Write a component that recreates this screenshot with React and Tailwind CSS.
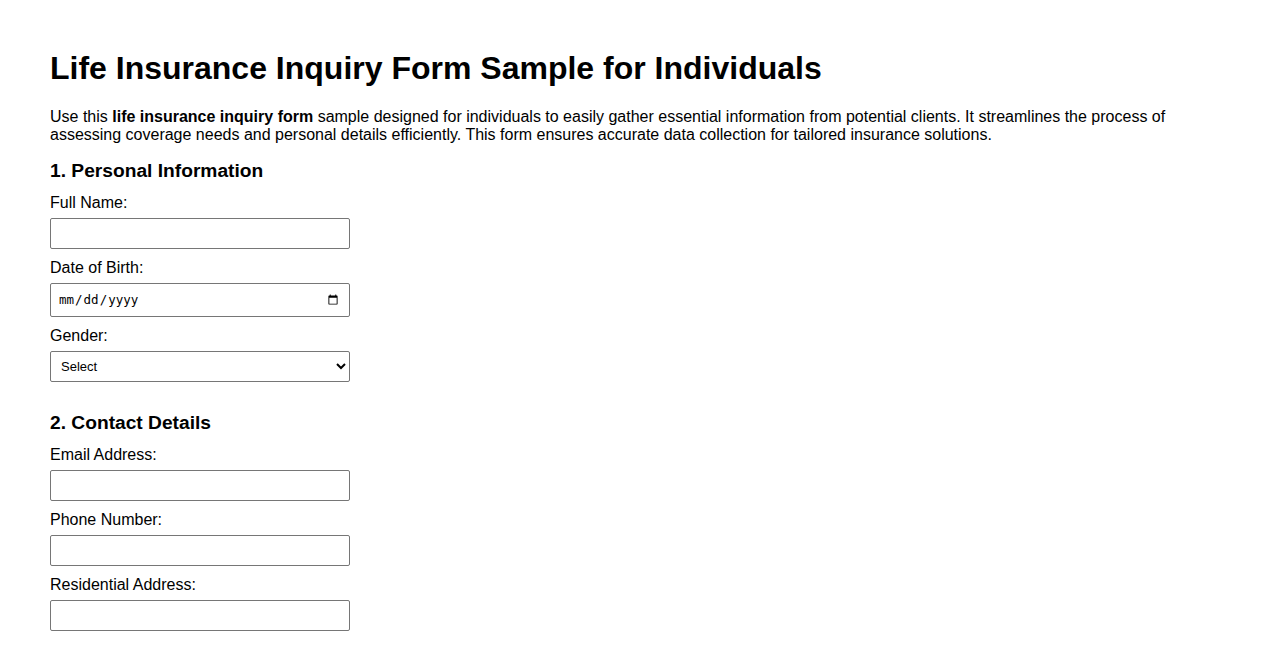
import React from "react";

const font = { fontFamily: '"Liberation Sans", Arial, sans-serif' };

const Field = ({ label, children, last }) => (
  <div className={last ? "" : "mb-[9px]"}>
    <label className="block text-[16px] leading-[18px] pt-[1px] mb-[6px]">{label}</label>
    {children}
  </div>
);

const inputCls =
  "block w-[300px] h-[31px] border border-[#767676] rounded-[2px] bg-white px-2 text-[13px] outline-none";

const App = () => {
  return (
    <div
      className="min-h-screen bg-white text-black pt-[50px] px-[50px] pb-8 font-['Liberation_Sans',Arial,sans-serif]"
      style={font}
    >
      <h1 className="text-[32px] leading-[37px] font-bold mb-[21px]">
        Life Insurance Inquiry Form Sample for Individuals
      </h1>

      <p className="text-[16px] leading-[18px] mb-[16px]">
        Use this <strong className="font-bold">life insurance inquiry form</strong> sample designed for
        individuals to easily gather essential information from potential clients. It streamlines the
        process of assessing coverage needs and personal details efficiently. This form ensures accurate
        data collection for tailored insurance solutions.
      </p>

      <form>
        <h2 className="text-[19.2px] leading-[22px] font-bold mb-[11px]">1. Personal Information</h2>

        <Field label="Full Name:">
          <input type="text" className={inputCls} />
        </Field>

        <Field label="Date of Birth:">
          <input
            type="date"
            className="block w-[300px] h-[34px] border border-[#767676] rounded-[2px] bg-white pl-[7px] pr-[8px] text-[12.5px] outline-none font-['DejaVu_Sans_Mono',monospace]"
          />
        </Field>

        <Field label="Gender:" last>
          <select className="block w-[300px] h-[31px] border border-[#767676] rounded-[2px] bg-white pl-[6px] pr-[2px] text-[13px] outline-none">
            <option>Select</option>
            <option>Male</option>
            <option>Female</option>
            <option>Other</option>
          </select>
        </Field>

        <h2 className="text-[19.2px] leading-[22px] font-bold mt-[30px] mb-[11px]">2. Contact Details</h2>

        <Field label="Email Address:">
          <input type="email" className={inputCls} />
        </Field>

        <Field label="Phone Number:">
          <input type="tel" className={inputCls} />
        </Field>

        <Field label="Residential Address:" last>
          <input type="text" className={inputCls} />
        </Field>
      </form>
    </div>
  );
};

export default App;
